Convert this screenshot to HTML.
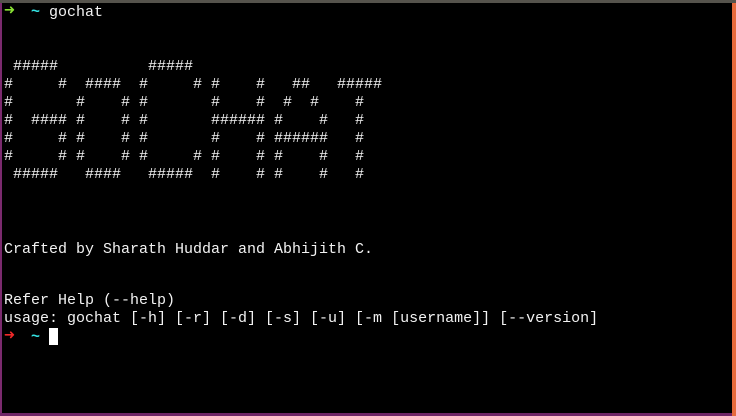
<!DOCTYPE html>
<html><head><meta charset="utf-8"><style>
html,body{margin:0;padding:0;background:#000;width:736px;height:416px;overflow:hidden;position:relative}
.top{position:absolute;left:0;top:0;width:736px;height:3px;background:#55534c}
.l{position:absolute;left:0;top:3px;width:2px;height:413px;background:#7b2a6e}
.b{position:absolute;left:0;top:413px;width:736px;height:3px;background:#6f2566}
.r{position:absolute;left:732px;top:3px;width:4px;height:413px;background:#e66a3c}
pre{position:absolute;left:4px;top:4px;margin:0;font-family:"Liberation Mono",monospace;font-size:15px;line-height:18px;color:#f2f2f2;letter-spacing:0}
.g{color:#8ae234;font-weight:bold}.c{color:#34e2e2;font-weight:bold}.rd{color:#ef2929;font-weight:bold}
.a{display:inline-block;width:9px;font-size:18px;line-height:14px}
.cur{display:inline-block;width:9px;height:17px;background:#fff;vertical-align:-4px}
</style></head><body>
<div class="top"></div><div class="l"></div><div class="b"></div><div class="r"></div>
<pre><span class="g a">➜</span>  <span class="c">~</span> gochat


 #####          #####
#     #  ####  #     # #    #   ##   #####
#       #    # #       #    #  #  #    #
#  #### #    # #       ###### #    #   #
#     # #    # #       #    # ######   #
#     # #    # #     # #    # #    #   #
 #####   ####   #####  #    # #    #   #



<span style="position:relative;top:3px">Crafted by Sharath Huddar and Abhijith C.</span>


Refer Help (--help)
usage: gochat [-h] [-r] [-d] [-s] [-u] [-m [username]] [--version]
<span class="rd a">➜</span>  <span class="c">~</span> <span class="cur"></span></pre>
</body></html>
